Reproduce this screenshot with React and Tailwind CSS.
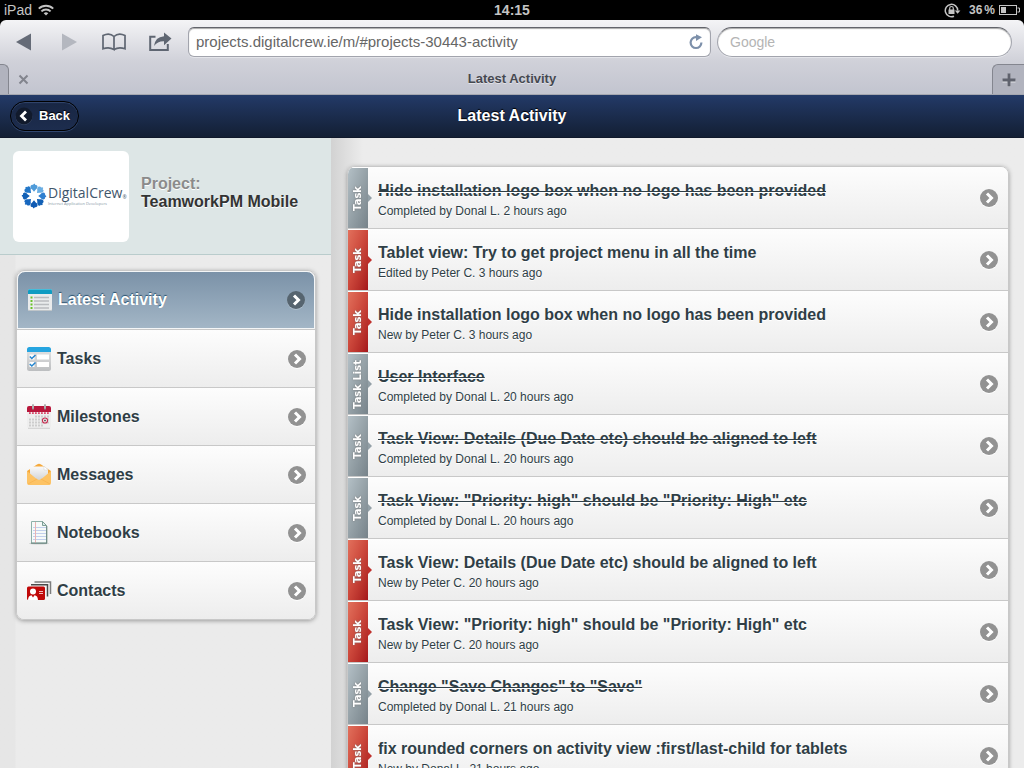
const menu = [
  { label: 'Latest Activity', Icon: ActivityIcon, active: true },
  { label: 'Tasks', Icon: TasksIcon },
  { label: 'Milestones', Icon: MilestonesIcon },
  { label: 'Messages', Icon: MessagesIcon },
  { label: 'Notebooks', Icon: NotebooksIcon },
  { label: 'Contacts', Icon: ContactsIcon },
];

const activity = [
  { kind: 'Task', title: 'Hide installation logo box when no logo has been provided', meta: 'Completed by Donal L. 2 hours ago', done: true },
  { kind: 'Task', title: 'Tablet view: Try to get project menu in all the time', meta: 'Edited by Peter C. 3 hours ago' },
  { kind: 'Task', title: 'Hide installation logo box when no logo has been provided', meta: 'New by Peter C. 3 hours ago' },
  { kind: 'Task List', title: 'User Interface', meta: 'Completed by Donal L. 20 hours ago', done: true },
  { kind: 'Task', title: 'Task View: Details (Due Date etc) should be aligned to left', meta: 'Completed by Donal L. 20 hours ago', done: true },
  { kind: 'Task', title: 'Task View: "Priority: high" should be "Priority: High" etc', meta: 'Completed by Donal L. 20 hours ago', done: true },
  { kind: 'Task', title: 'Task View: Details (Due Date etc) should be aligned to left', meta: 'New by Peter C. 20 hours ago' },
  { kind: 'Task', title: 'Task View: "Priority: high" should be "Priority: High" etc', meta: 'New by Peter C. 20 hours ago' },
  { kind: 'Task', title: 'Change "Save Changes" to "Save"', meta: 'Completed by Donal L. 21 hours ago', done: true },
  { kind: 'Task', title: 'fix rounded corners on activity view :first/last-child for tablets', meta: 'New by Donal L. 21 hours ago' },
];

function ActivityIcon() {
  return (
    <svg width="26" height="24" viewBox="0 0 26 24" aria-hidden="true">
      <rect x="1" y="1" width="24" height="22" rx="2" fill="#e9ebec" />
      <rect x="1" y="22" width="24" height="1" rx="0.5" fill="#bfc5c9" />
      <path d="M1 6V3a2 2 0 0 1 2-2h20a2 2 0 0 1 2 2v3z" fill="#0f9cc2" />
      <path d="M3 1h20a2 2 0 0 1 1.700 1H1.300A2 2 0 0 1 3 1z" fill="#45bddb" />
      <path d="M7 9.500h15M7 13h15M7 16.500h15M7 20h15" stroke="#b9bcbf" strokeWidth="1.600" />
      <path d="M3.500 9.500h2M3.500 13h2M3.500 16.500h2M3.500 20h2" stroke="#69c22b" strokeWidth="2" />
    </svg>
  );
}

function TasksIcon() {
  return (
    <svg width="26" height="26" viewBox="0 0 26 26" aria-hidden="true">
      <defs>
        <linearGradient id="tasks-body" x1="0" y1="0" x2="0" y2="1">
          <stop offset="0" stopColor="#e6e7e8" />
          <stop offset="1" stopColor="#bcbec0" />
        </linearGradient>
      </defs>
      <rect x="1" y="1" width="24" height="24" rx="2.500" fill="url(#tasks-body)" />
      <path d="M1 6V3.500A2.500 2.500 0 0 1 3.500 1h19A2.500 2.500 0 0 1 25 3.500V6z" fill="#26a5e0" />
      <path d="M3.500 8.500h5v5h-5zM11 8.500h12v5H11zM3.500 16h5v5h-5zM11 16h12v5H11z" fill="#fff" />
      <path d="M3.800 10.500l2 2 3.700-3.500M3.800 18l2 2 3.700-3.500" fill="none" stroke="#2485cf" strokeWidth="1.500" />
    </svg>
  );
}

function MilestonesIcon() {
  return (
    <svg width="26" height="26" viewBox="0 0 26 26" aria-hidden="true">
      <rect x="1" y="3" width="24" height="21" rx="2" fill="#eeeeee" />
      <path d="M2 24.300h22" stroke="#cfcfcf" />
      <path d="M1 8V4a2 2 0 0 1 2-2h20a2 2 0 0 1 2 2v4z" fill="#b8173b" />
      <path d="M3 9.200h20" stroke="#d8496a" strokeWidth="1.800" strokeDasharray="1.800 1.200" />
      <path d="M7 .5v5M19 .5v5" stroke="#888" strokeWidth="2" />
      <path d="M7 .5v4M19 .5v4" stroke="#d5d5d5" />
      <path d="M9 12.500h14M3 15.500h20M3 18.500h20M3 21.500h14" stroke="#cdcdcd" strokeWidth="2" strokeDasharray="2 1" />
      <circle cx="19" cy="16.500" r="2.500" fill="#fff" stroke="#c62d50" strokeWidth="1.200" />
      <circle cx="19" cy="16.500" r="1" fill="#555" />
    </svg>
  );
}

function MessagesIcon() {
  return (
    <svg width="26" height="24" viewBox="0 0 26 24" aria-hidden="true">
      <defs>
        <linearGradient id="mail-paper" x1="0" y1="0" x2="0" y2="1">
          <stop offset="0" stopColor="#fafafa" />
          <stop offset="1" stopColor="#cfd1d4" />
        </linearGradient>
      </defs>
      <path d="M1 8L11 1.500q2-1.300 4 0L25 8v12H1z" fill="#f5a93c" />
      <path d="M4 3.500h15l3 3V12l-9 6-9-6z" fill="url(#mail-paper)" />
      <path d="M18 3l4 4h-4z" fill="#fff" stroke="#d0d0d0" strokeWidth="0.500" />
      <path d="M1 8l9 7.500L13 17l3-1.500L25 8v12a2 2 0 0 1-2 2H3a2 2 0 0 1-2-2z" fill="#fdc365" />
      <path d="M2 21l9-5M24 21l-9-5" stroke="#f7b04c" strokeWidth="0.700" />
    </svg>
  );
}

function NotebooksIcon() {
  return (
    <svg width="26" height="26" viewBox="0 0 26 26" aria-hidden="true">
      <ellipse cx="13" cy="23.500" rx="10" ry="1" fill="#ccd1d0" />
      <path d="M5.500 1.500h11l4 4v17.500h-15z" fill="#f6faf9" stroke="#8fb1a9" />
      <path d="M7 7.500h13M7 10.500h13M7 13.500h13M7 16.500h13M7 19.500h13" stroke="#c2d0ec" />
      <path d="M9.500 2v21" stroke="#eab4b4" />
      <path d="M16.500 1.500v4h4z" fill="#dcebe7" stroke="#7d9e96" />
      <path d="M5 23.200h16M20.800 6v17" stroke="#67817b" />
    </svg>
  );
}

function ContactsIcon() {
  return (
    <svg width="26" height="24" viewBox="0 0 26 24" aria-hidden="true">
      <path d="M8.500 3h16v12" fill="none" stroke="#7d7d7d" strokeWidth="1.500" />
      <path d="M5 5.800h16.500v11.700" fill="none" stroke="#4a4a4a" strokeWidth="1.500" />
      <rect x="1" y="7.500" width="18" height="13.500" rx="1.500" fill="#c00909" />
      <circle cx="7" cy="12.500" r="3" fill="#fff" />
      <path d="M2 21q.3-4.500 3.500-4.800L7 18.500l1.500-2.300q3.200.3 3.500 4.800z" fill="#fff" />
      <path d="M13 12.500h4M13 14.500h4" stroke="#f3bcbc" />
    </svg>
  );
}

function Chevron({ active }) {
  return (
    <svg className="shrink-0" width="20" height="20" viewBox="0 0 20 20" aria-hidden="true">
      <circle cx="10" cy="11" r="9" fill="#fff" fillOpacity={active ? 0.25 : 0.9} />
      <circle cx="10" cy="10" r="9" fill={active ? '#56646f' : '#929292'} />
      <path d="M8 5.500l4.500 4.500L8 14.500" fill="none" stroke="#fff" strokeWidth="3" />
    </svg>
  );
}

const petals = [
  { angle: 0, fill: '#4f9bd9' },
  { angle: 45, fill: '#6aaee3' },
  { angle: 90, fill: '#2f7fcf' },
  { angle: 135, fill: '#1260b5' },
  { angle: 180, fill: '#0f5ab3' },
  { angle: 225, fill: '#1767bf' },
  { angle: 270, fill: '#1260b5' },
  { angle: 315, fill: '#2377c8' },
];

function CompanyLogo() {
  return (
    <svg className="shrink-0" width="26" height="26" viewBox="-13 -13 26 26" aria-hidden="true">
      {petals.map(({ angle, fill }) => (
        <path
          key={angle}
          transform={`rotate(${angle})`}
          d="M0-4.200L-1.800-6.500Q-4.300-8-3.300-10.300-1.900-11.800-.9-11-.5-12.600.9-12.200 1.200-11.300 1.300-11 3.300-11.500 3.500-9.500 3.600-7.500 1.800-6.500z"
          fill={fill}
        />
      ))}
    </svg>
  );
}

function StatusBar() {
  return (
    <div className="grid h-5 shrink-0 grid-cols-3 items-center bg-black px-1 text-sm leading-5 text-[#c4c4c4]">
      <div className="flex items-center gap-1.5">
        <span>iPad</span>
        <svg width="16" height="12" viewBox="0 0 16 12" fill="none" stroke="#c4c4c4" strokeWidth="2" aria-hidden="true">
          <path d="M.8 4.600a10.300 10.300 0 0 1 14.400 0M3.400 7.400a6.600 6.600 0 0 1 9.200 0" />
          <path d="M8 11.500L5.700 9.300a3.300 3.300 0 0 1 4.600 0z" fill="#c4c4c4" stroke="none" />
        </svg>
      </div>
      <div className="text-center font-bold">14:15</div>
      <div className="flex items-center justify-end gap-1">
        <svg className="mr-1" width="17" height="15" viewBox="0 0 17 15" aria-hidden="true">
          <path d="M10 13.200A6.200 6.200 0 1 1 13.700 7.500" fill="none" stroke="#c4c4c4" strokeWidth="1.500" />
          <path d="M10.800 7.500h5.600l-2.800 3.300z" fill="#c4c4c4" />
          <rect x="4.500" y="6.500" width="6" height="4.500" fill="#c4c4c4" />
          <path d="M5.700 7V5.300a1.800 1.800 0 0 1 3.600 0V7" fill="none" stroke="#c4c4c4" strokeWidth="1.200" />
        </svg>
        <span className="flex gap-0.5 text-xs leading-5 font-bold">
          <span>36</span>
          <span>%</span>
        </span>
        <svg width="21" height="11" viewBox="0 0 21 11" aria-hidden="true">
          <rect x=".5" y=".5" width="17" height="9" fill="none" stroke="#c4c4c4" />
          <rect x="2" y="2" width="5" height="6" fill="#c4c4c4" />
          <path d="M18.500 3h2v4h-2" fill="none" stroke="#c4c4c4" />
        </svg>
      </div>
    </div>
  );
}

function BrowserBar() {
  return (
    <div className="shrink-0 bg-black">
      <div className="rounded-t-md bg-linear-to-b from-[#f4f4f6] via-[#d0d1d9] via-55% to-[#c2c4cf]">
        <div className="flex h-11 items-center pr-3">
          <div className="flex w-47 shrink-0 items-center pl-4">
            <button aria-label="Previous page" className="w-11">
              <svg width="16" height="18" viewBox="0 0 16 18"><path d="M0 9L15 .5v17z" fill="#656b77" /></svg>
            </button>
            <button aria-label="Next page" className="w-10">
              <svg className="ml-0.5" width="16" height="18" viewBox="0 0 16 18"><path d="M15 9L0 .5v17z" fill="#b4b7bf" /></svg>
            </button>
            <button aria-label="Bookmarks" className="w-12">
              <svg className="ml-0.5" width="24" height="18" viewBox="0 0 24 18" fill="none" stroke="#5f6672" strokeWidth="1.700">
                <path d="M12 16.500V3.500Q7.500-.8 1 2.500v13.300q6-2.300 11 .7zM12 3.500q4.500-4.300 11-1v13.300q-6-2.300-11 .7" />
              </svg>
            </button>
            <button aria-label="Share">
              <svg width="24" height="20" viewBox="0 0 24 20">
                <path d="M7.500 4.700H2.200v13.200h17.600V12" fill="none" stroke="#5f6672" strokeWidth="2" />
                <path d="M23.500 6.500L16 .5v3.700Q7 5 6 14q3.500-5 10-4.800v4z" fill="#5f6672" />
              </svg>
            </button>
          </div>
          <div className="flex h-[30px] min-w-0 flex-1 items-center rounded-md border border-[#a2a4ad] border-t-[#62646b] bg-white pr-1.5 pl-[7px] shadow-[inset_0_1px_1px_#aaa,0_1px_0_#e4e5ea]">
            <input aria-label="Address" defaultValue="projects.digitalcrew.ie/m/#projects-30443-activity" className="min-w-0 flex-1 bg-transparent text-[15px] text-[#666] outline-none" />
            <button aria-label="Reload">
              <svg width="16" height="16" viewBox="0 0 16 16">
                <path d="M9.500 3.200H8a5.400 5.400 0 1 0 5.400 5.400" fill="none" stroke="#7d90aa" strokeWidth="2.200" />
                <path d="M8 .3l6 3-6 3.600z" fill="#7d90aa" />
              </svg>
            </button>
          </div>
          <input aria-label="Google search" placeholder="Google" className="ml-1.5 h-[30px] w-[295px] shrink-0 rounded-full border border-[#a2a4ad] border-t-[#62646b] bg-white px-3 text-sm text-[#666] shadow-[inset_0_1px_1px_#aaa,0_1px_0_#e4e5ea] outline-none placeholder:text-[#b4b4b4]" />
        </div>
        <div className="grid h-[31px] grid-cols-3 items-stretch border-b border-[#a5a7b0]">
          <div className="flex">
            <div className="w-[9px] rounded-tr-md border-t border-r border-[#84868f] bg-[#b1b3be]" />
            <button aria-label="Close tab" className="w-8 pl-[9px]">
              <svg width="11" height="11" viewBox="0 0 11 11"><path d="M1.500 1.500l8 8M9.500 1.500l-8 8" stroke="#82848d" strokeWidth="2" /></svg>
            </button>
          </div>
          <div className="flex items-center justify-center text-[13px] font-bold text-[#454850] [text-shadow:0_1px_0_#e2e3e8]">
            Latest Activity
          </div>
          <button aria-label="New tab" className="flex w-8 items-center justify-center justify-self-end rounded-tl-md border-t border-l border-[#84868f] bg-[#b1b3be]">
            <svg width="14" height="14" viewBox="0 0 14 14"><path d="M7 1v13M.5 8h13" stroke="#e3e4e8" strokeWidth="3" /><path d="M7 .5v13M.5 7h13" stroke="#5f626d" strokeWidth="3" /></svg>
          </button>
        </div>
      </div>
    </div>
  );
}

function PageHeader() {
  return (
    <header className="grid h-[43px] shrink-0 grid-cols-3 items-center border-b border-[#10192b] bg-linear-to-b from-[#233a68] to-[#131f34] px-2.5 text-white">
      <button className="flex h-[30px] w-[69px] items-center gap-1.5 rounded-full border border-black bg-linear-to-b from-[#182643] to-[#1d2d4e] pl-1 text-[13px] font-bold shadow-[0_1px_0_#30466f,inset_0_1px_1px_#34486f] [text-shadow:0_-1px_1px_#000]">
        <svg width="18" height="18" viewBox="0 0 18 18" aria-hidden="true">
          <circle cx="9" cy="9.500" r="8.500" fill="#3e4c69" />
          <circle cx="9" cy="9" r="8.500" fill="#111a2c" />
          <path d="M11 4.500L6.500 9l4.500 4.500" fill="none" stroke="#fff" strokeWidth="2.800" />
        </svg>
        Back
      </button>
      <h1 className="text-center text-base font-bold [text-shadow:0_-1px_1px_#000]">Latest Activity</h1>
    </header>
  );
}

function Sidebar() {
  return (
    <aside className="w-[331px] shrink-0 bg-[#ebebeb]">
      <div className="flex h-[117px] items-center border-b border-[#b9cccc] bg-[#dde6e6] pl-[13px]">
        <div className="flex h-[91px] w-[116px] items-center rounded-md bg-white pl-2">
          <CompanyLogo />
          <div className="pl-px font-['Open_Sans',sans-serif]">
            <div className="flex text-sm leading-4 text-[#3f566b]">
              DigitalCrew<span className="self-end text-[5px] leading-[8px]">®</span>
            </div>
            <div className="text-[4px] leading-[6px] text-[#8494a4]">Internet Application Developers</div>
          </div>
        </div>
        <div className="pb-1.5 pl-3 text-base leading-[18px] font-bold [text-shadow:0_1px_0_#fff]">
          <div className="text-[#8b8b8b]">Project:</div>
          <div className="text-[#333]">TeamworkPM Mobile</div>
        </div>
      </div>
      <div className="h-full bg-linear-to-r from-[#e6e6e6] from-[15px] to-[#ebebeb] to-[16px] pt-[15px]">
        <nav className="mr-[15px] ml-4 overflow-hidden rounded-lg border border-[#c8c8c8] shadow-[0_1px_4px_#999]">
          {menu.map(({ label, Icon, active }) => (
            <a
              key={label}
              href="#"
              className={
                active
                  ? 'flex h-[58px] items-center gap-1 rounded-t-lg border border-[#f4f6f7] bg-linear-to-b from-[#7b92a8] to-[#a3b6c6] px-2 text-white [text-shadow:0_-1px_1px_#28506f]'
                  : 'flex h-[58px] items-center gap-1 border-t border-[#c8c8c8] bg-linear-to-b from-[#fdfdfd] to-[#ededed] px-2 text-[#2f3e46] [text-shadow:0_1px_0_#fff]'
              }
            >
              <span className="flex w-7 justify-center"><Icon /></span>
              <span className="flex-1 text-base font-bold">{label}</span>
              <Chevron active={active} />
            </a>
          ))}
        </nav>
      </div>
    </aside>
  );
}

function ActivityRow({ kind, title, meta, done }) {
  return (
    <li className="border-b border-[#c8c8c8]">
      <a href="#" className="flex h-[61px] items-center bg-linear-to-b from-[#fdfdfd] to-[#ededed] pr-[9px] text-[#2f3e46] [text-shadow:0_1px_0_#fff]">
        <span
          className={
            done
              ? 'flex h-full w-5 shrink-0 items-center justify-center border-t border-white bg-linear-to-br from-[#b4c0c6] to-[#77838a]'
              : 'flex h-full w-5 shrink-0 items-center justify-center border-t border-white bg-linear-to-br from-[#e2705c] via-[#cb463a] to-[#a5151b]'
          }
        >
          <span className="rotate-180 font-['DejaVu_Sans',sans-serif] text-[10px] leading-5 font-bold whitespace-nowrap text-white [text-shadow:0_0_2px_#777] [writing-mode:vertical-rl]">
            {kind}
          </span>
        </span>
        <svg className="w-2.5 shrink-0" width="10" height="8" viewBox="0 0 10 8" aria-hidden="true">
          <path d="M0 0l4 4-4 4z" fill={done ? '#93a0a7' : '#bf302c'} />
        </svg>
        <span className="min-w-0 flex-1 pt-1.5">
          <span className={done ? 'block truncate text-base leading-5 font-bold line-through' : 'block truncate text-base leading-5 font-bold'}>{title}</span>
          <span className="block truncate text-xs leading-5">{meta}</span>
        </span>
        <Chevron />
      </a>
    </li>
  );
}

export default function App() {
  return (
    <div className="flex h-screen flex-col overflow-hidden bg-[#ececec] font-['Liberation_Sans',Arial,sans-serif]">
      <StatusBar />
      <BrowserBar />
      <PageHeader />
      <div className="flex min-h-0 flex-1 overflow-hidden">
        <Sidebar />
        <main className="min-w-0 flex-1 overflow-y-auto bg-linear-to-r from-[#d2d2d2] to-[#ececec] to-[32px] pt-7 pr-[15px] pl-4 [scrollbar-width:none]">
          <ul className="overflow-hidden rounded-lg border border-[#c8c8c8] shadow-[0_1px_4px_#999]">
            {activity.map((item, i) => (
              <ActivityRow key={i} {...item} />
            ))}
          </ul>
        </main>
      </div>
    </div>
  );
}
